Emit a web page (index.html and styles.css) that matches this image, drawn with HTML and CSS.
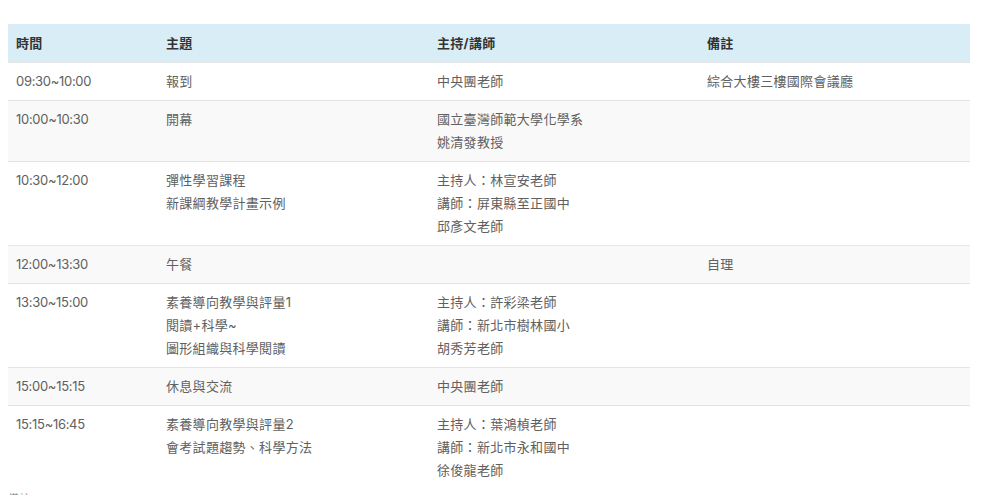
FILE: index.html
```html
<!DOCTYPE html>
<html lang="zh-Hant">
<head>
<meta charset="utf-8">
<link rel="stylesheet" href="styles.css">
</head>
<body>
<table class="schedule">
  <thead>
    <tr><th class="c-time">時間</th><th class="c-topic">主題</th><th class="c-host">主持/講師</th><th>備註</th></tr>
  </thead>
  <tbody>
    <tr><td>09:30~10:00</td><td>報到</td><td>中央團老師</td><td>綜合大樓三樓國際會議廳</td></tr>
    <tr><td>10:00~10:30</td><td>開幕</td><td>國立臺灣師範大學化學系<br>姚清發教授</td><td></td></tr>
    <tr><td>10:30~12:00</td><td>彈性學習課程<br>新課綱教學計畫示例</td><td>主持人：林宣安老師<br>講師：屏東縣至正國中<br>邱彥文老師</td><td></td></tr>
    <tr><td>12:00~13:30</td><td>午餐</td><td></td><td>自理</td></tr>
    <tr><td>13:30~15:00</td><td>素養導向教學與評量1<br>閱讀+科學~<br>圖形組織與科學閱讀</td><td>主持人：許彩梁老師<br>講師：新北市樹林國小<br>胡秀芳老師</td><td></td></tr>
    <tr><td>15:00~15:15</td><td>休息與交流</td><td>中央團老師</td><td></td></tr>
    <tr><td>15:15~16:45</td><td>素養導向教學與評量2<br>會考試題趨勢、科學方法</td><td>主持人：葉鴻楨老師<br>講師：新北市永和國中<br>徐俊龍老師</td><td></td></tr>
  </tbody>
</table>
<p class="note">備註</p>
</body>
</html>
```
FILE: styles.css
```css
html, body { margin: 0; padding: 0; background: #fff; }
body {
  padding: 24px 30px 0 8px;
  font-family: "Inter", "Noto Sans CJK TC", sans-serif;
  font-size: 13px;
  letter-spacing: 0.3px;
  color: #606060;
}
.schedule {
  width: 962px;
  border-collapse: collapse;
  table-layout: fixed;
}
.schedule th, .schedule td {
  text-align: left;
  vertical-align: top;
  padding: 7px 8px;
  line-height: 23px;
  border-top: 1px solid #e4e4e4;
}
.schedule td:first-child { letter-spacing: -0.3px; }
.schedule th {
  background: #d9edf7;
  color: #333;
  font-weight: 700;
  border-top: none;
  line-height: 24px;
}
.c-time { width: 134px; }
.c-topic { width: 255px; }
.c-host { width: 254px; }
.schedule thead tr { border-bottom: 1px solid #cfdfe8; }
.schedule tbody tr:nth-child(even) { background: #f9f9f9; }
.note { margin: 1px 0 0; color: #999; font-size: 11px; }
```
